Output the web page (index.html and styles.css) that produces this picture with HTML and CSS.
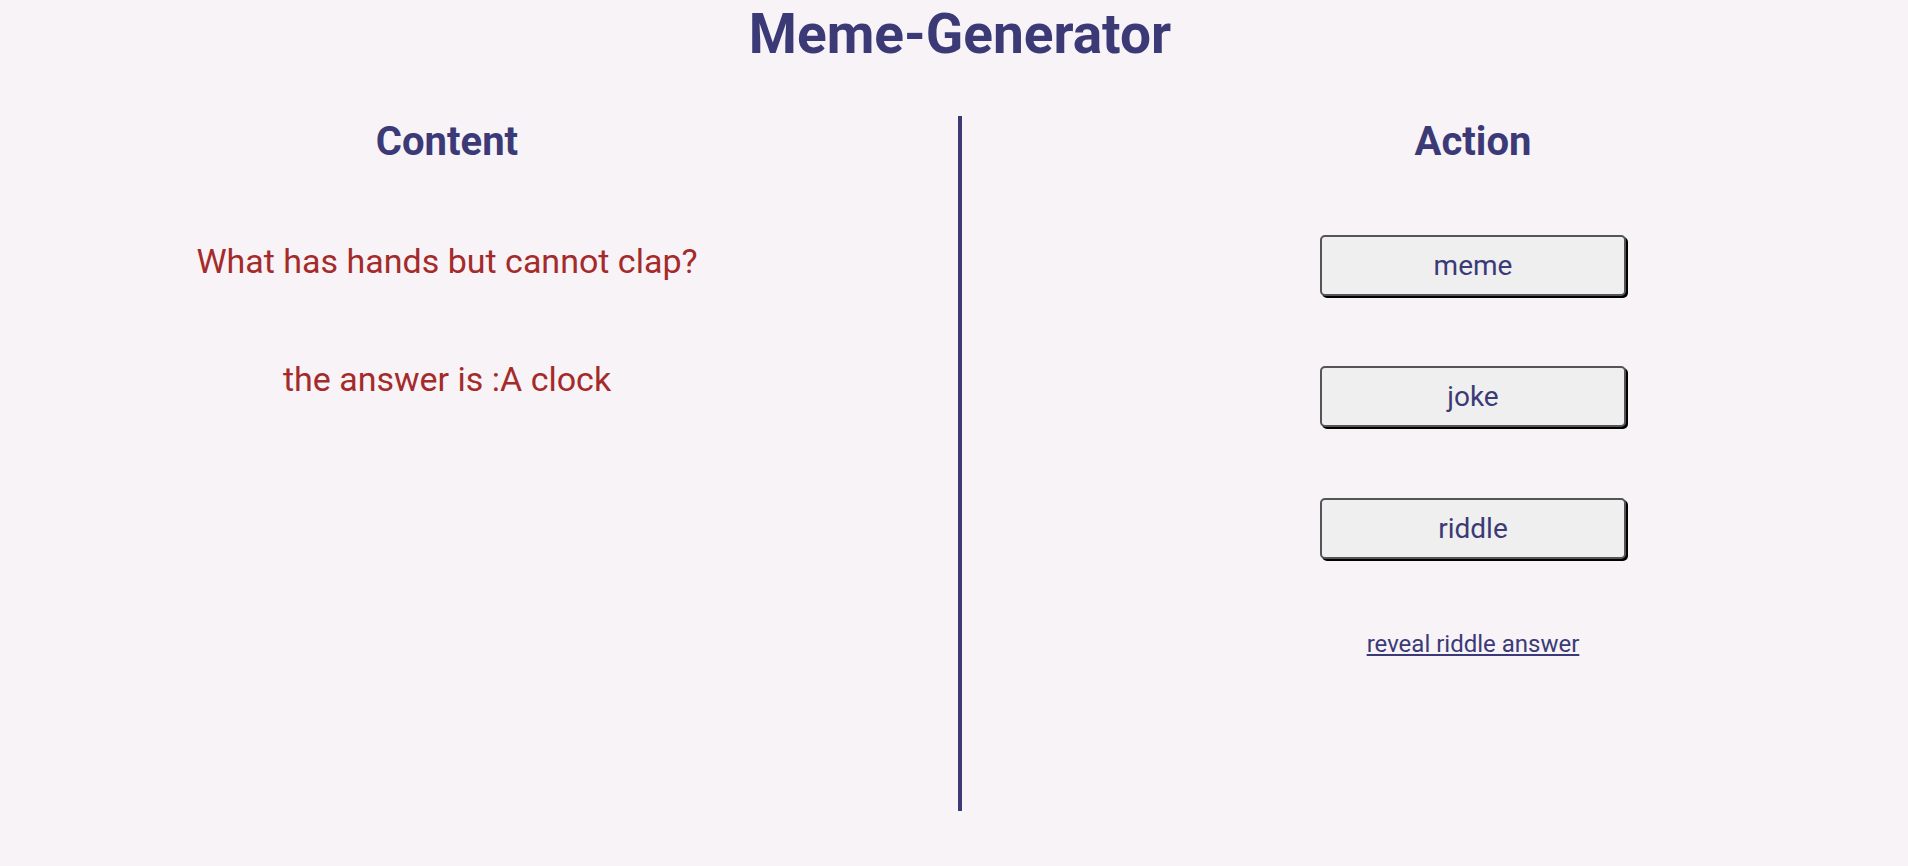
FILE: index.html
```html
<!DOCTYPE html>
<html lang="en">
<head>
<meta charset="utf-8">
<title>Meme-Generator</title>
<link rel="stylesheet" href="styles.css">
</head>
<body>
<div class="page">
  <h1 class="title">Meme-Generator</h1>
  <main class="board">
    <section class="column content-col">
      <h2 class="col-title">Content</h2>
      <p class="content-text">What has hands but cannot clap?</p>
      <p class="content-text">the answer is :A clock</p>
    </section>
    <div class="divider"></div>
    <section class="column action-col">
      <h2 class="col-title">Action</h2>
      <button class="action-btn" type="button">meme</button>
      <button class="action-btn" type="button">joke</button>
      <button class="action-btn" type="button">riddle</button>
      <a class="reveal-link" href="#">reveal riddle answer</a>
    </section>
  </main>
</div>
</body>
</html>
```
FILE: styles.css
```css
html, body {
  margin: 0;
  padding: 0;
  background: #f7f3f7;
  overflow: hidden;
}

body {
  font-family: Roboto, "Liberation Sans", sans-serif;
  color: #3b3a77;
}

.page {
  padding-left: 12px;
}

.title {
  margin: 0;
  text-align: center;
  font-size: 55px;
  font-weight: 700;
  line-height: 68px;
  color: #3b3a77;
}

.board {
  display: flex;
  margin-top: 48px;
  height: 695px;
  gap: 76px;
}

.column {
  flex: 1;
  display: flex;
  flex-direction: column;
  align-items: center;
}

.divider {
  width: 4px;
  background: #3b3a77;
}

.col-title {
  margin: 2px 0 -2px;
  font-size: 40px;
  font-weight: 700;
  line-height: 1.2;
  color: #3b3a77;
}

.content-col {
  gap: 77px;
}

.content-text {
  margin: 0;
  font-size: 34px;
  line-height: 1.2;
  color: #a52a2a;
}

.action-col {
  gap: 70.5px;
}

.action-btn {
  box-sizing: border-box;
  width: 306px;
  height: 61px;
  padding: 0;
  font-family: Roboto, "Liberation Sans", sans-serif;
  font-size: 28px;
  color: #3b3a77;
  background: #efefef;
  border: 2px solid #555;
  border-radius: 5px;
  box-shadow: 2px 2px 0 #000;
  cursor: pointer;
}

.reveal-link {
  margin-top: 1px;
  font-size: 24px;
  line-height: 1.2;
  color: #3b3a77;
  text-decoration: underline;
}
```
